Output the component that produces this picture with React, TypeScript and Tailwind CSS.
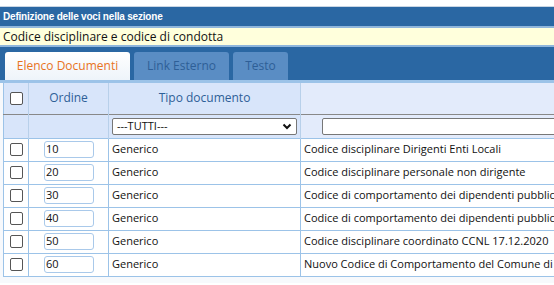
const rows = [
  { ord: "10", tipo: "Generico", desc: "Codice disciplinare Dirigenti Enti Locali" },
  { ord: "20", tipo: "Generico", desc: "Codice disciplinare personale non dirigente" },
  { ord: "30", tipo: "Generico", desc: "Codice di comportamento dei dipendenti pubblici" },
  { ord: "40", tipo: "Generico", desc: "Codice di comportamento dei dipendenti pubblici" },
  { ord: "50", tipo: "Generico", desc: "Codice disciplinare coordinato CCNL 17.12.2020" },
  { ord: "60", tipo: "Generico", desc: "Nuovo Codice di Comportamento del Comune di Roma" },
];

const Check = () => (
  <span className="block w-[13px] h-[13px] mx-auto rounded-[2px] border border-[#555] bg-white" />
);

export default function App() {
  return (
    <div className="w-[554px] h-[285px] overflow-hidden bg-white pt-[5px] font-['Open_Sans',sans-serif] text-[#111]">
      {/* section title */}
      <div className="border-t border-[#c9d6e4] bg-[#2a67a3] h-[20px] mt-[1px] flex items-center px-[3px]">
        <span className="font-['Liberation_Sans',sans-serif] font-bold text-[10px] text-white tracking-[-0.2px]">
          Definizione delle voci nella sezione
        </span>
      </div>
      <div className="border-y-2 border-[#8fb6dc] bg-[#ffffdc] h-[21px] flex items-center px-[3px] text-[12px]">
        Codice disciplinare e codice di condotta
      </div>

      {/* tabs */}
      <div className="bg-[#2a67a3] h-[33px] flex items-end gap-[4px] pl-[5px]">
        <div className="h-[28px] w-[125px] rounded-t-[3px] bg-gradient-to-b from-white to-[#eef4fa] flex items-center justify-center text-[12px] text-[#e8731e]">
          Elenco Documenti
        </div>
        <div className="h-[28px] w-[95px] rounded-t-[3px] bg-[#5a8dc4] flex items-center justify-center text-[12px] text-[#2e5f97]">
          Link Esterno
        </div>
        <div className="h-[28px] w-[55px] rounded-t-[3px] bg-[#5a8dc4] flex items-center justify-center text-[12px] text-[#2e5f97]">
          Testo
        </div>
      </div>

      {/* table */}
      <div className="border-t-[3px] border-[#9cc3e8] bg-[#f7f9fc] pl-[3px] h-[203px] overflow-hidden">
        <table className="border-collapse w-[700px] text-[11px] border-l border-[#9cc3e8]">
          <thead>
            <tr className="h-[31px] bg-[#d8e5fa] text-[#2e5f97] text-[12px] border-b border-[#888]">
              <th className="w-[25px] font-normal border-r border-[#b8d0ea]">
                <Check />
              </th>
              <th className="w-[80px] font-normal border-r border-[#b8d0ea]">Ordine</th>
              <th className="w-[192px] font-normal border-r border-[#b8d0ea]">Tipo documento</th>
              <th className="bg-[#e3ebfb]"></th>
            </tr>
            <tr className="h-[24px] bg-[#d8e5fa] border-b border-[#9cc3e8]">
              <th className="border-r border-[#b8d0ea]"></th>
              <th className="border-r border-[#b8d0ea]"></th>
              <th className="border-r border-[#b8d0ea] px-[3px]">
                <div className="h-[17px] bg-white border border-[#777] rounded-[2px] flex items-center justify-between px-[4px] font-normal text-[11px] text-[#111]">
                  <span>---TUTTI---</span>
                  <svg width="10" height="7" viewBox="0 0 10 7">
                    <path d="M1.5 1.5 L5 5 L8.5 1.5" fill="none" stroke="#111" strokeWidth="2" />
                  </svg>
                </div>
              </th>
              <th className="pl-[21px] bg-[#e3ebfb]">
                <div className="h-[17px] bg-white border border-[#777] rounded-[2px]" />
              </th>
            </tr>
          </thead>
          <tbody>
            {rows.map((r) => (
              <tr key={r.ord} className="h-[23px] bg-white border-b border-[#9cc3e8]">
                <td className="border-r border-[#9cc3e8]">
                  <Check />
                </td>
                <td className="border-r border-[#9cc3e8] pl-[15px]">
                  <div className="w-[50px] h-[17px] rounded-[3px] border border-[#a9c9ea] bg-white flex items-center pl-[1px] text-[11px]">
                    {r.ord}
                  </div>
                </td>
                <td className="border-r border-[#9cc3e8] pl-[3px]">{r.tipo}</td>
                <td className="pl-[3px] whitespace-nowrap">{r.desc}</td>
              </tr>
            ))}
          </tbody>
        </table>
      </div>
    </div>
  );
}
